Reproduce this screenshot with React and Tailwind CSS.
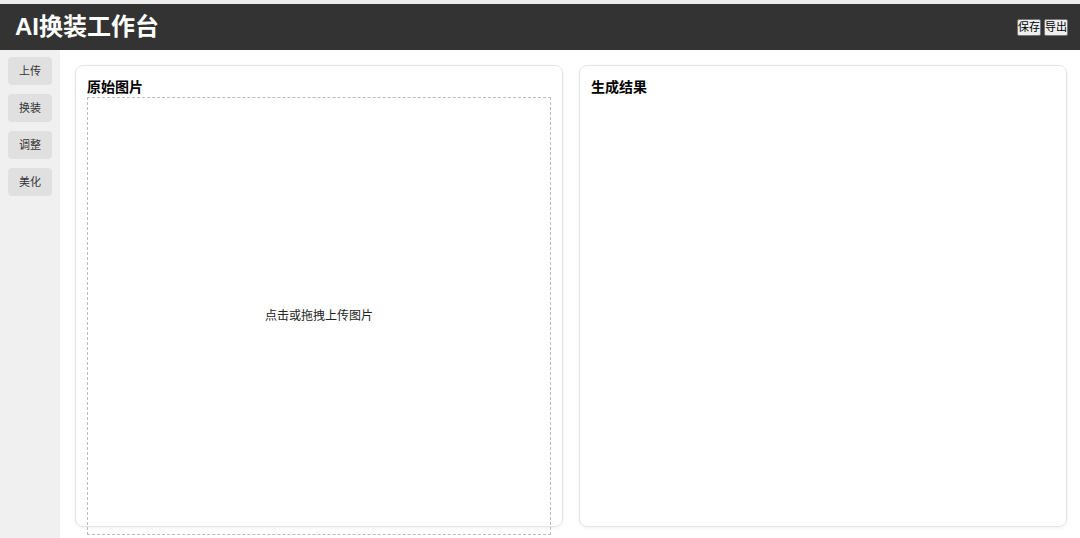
export default function App() {
  const font = { fontFamily: '"Liberation Sans", "Noto Sans CJK SC", sans-serif' };
  return (
    <div className="w-[1080px] h-[538px] overflow-hidden bg-[#f0f0f0] flex flex-col" style={font}>
      <div className="h-[4px] bg-[#ececec] shrink-0" />
      <header className="h-[46px] shrink-0 bg-[#333333] flex items-center justify-between pl-[15px] pr-[12px]">
        <h1 className="text-white text-[24px] font-bold leading-none tracking-[0px]">AI换装工作台</h1>
        <div className="flex gap-[3px]">
          <button className="w-[24px] h-[17px] text-[11px] leading-[15px] px-0 bg-[#efefef] border border-[#767676] rounded-[2px] text-black">保存</button>
          <button className="w-[24px] h-[17px] text-[11px] leading-[15px] px-0 bg-[#efefef] border border-[#767676] rounded-[2px] text-black">导出</button>
        </div>
      </header>
      <div className="flex flex-1 min-h-0">
        <aside className="w-[60px] shrink-0 bg-[#f0f0f0] flex flex-col gap-[9px] pt-[7px] pl-[8px]">
          {["上传", "换装", "调整", "美化"].map((t) => (
            <button key={t} className="w-[44px] h-[28px] bg-[#e0e0e0] rounded-[4px] text-[11px] text-[#333]">{t}</button>
          ))}
        </aside>
        <main className="flex-1 bg-white flex gap-[16px] pt-[15px] pl-[15px] pr-[13px] pb-[11px]">
          <section className="flex-1 border border-[#e4e4e4] rounded-[8px] shadow-[0_1px_3px_rgba(0,0,0,0.06)] px-[11px] pt-[11px] flex flex-col min-h-0">
            <h2 className="text-[14px] leading-[20px] font-bold text-black">原始图片</h2>
            <div className="h-[438px] shrink-0 border border-dashed border-[#bbbbbb] flex items-center justify-center text-[12px] text-[#222]">
              点击或拖拽上传图片
            </div>
          </section>
          <section className="flex-1 border border-[#e4e4e4] rounded-[8px] shadow-[0_1px_3px_rgba(0,0,0,0.06)] px-[11px] pt-[11px]">
            <h2 className="text-[14px] leading-[20px] font-bold text-black">生成结果</h2>
          </section>
        </main>
      </div>
    </div>
  );
}
